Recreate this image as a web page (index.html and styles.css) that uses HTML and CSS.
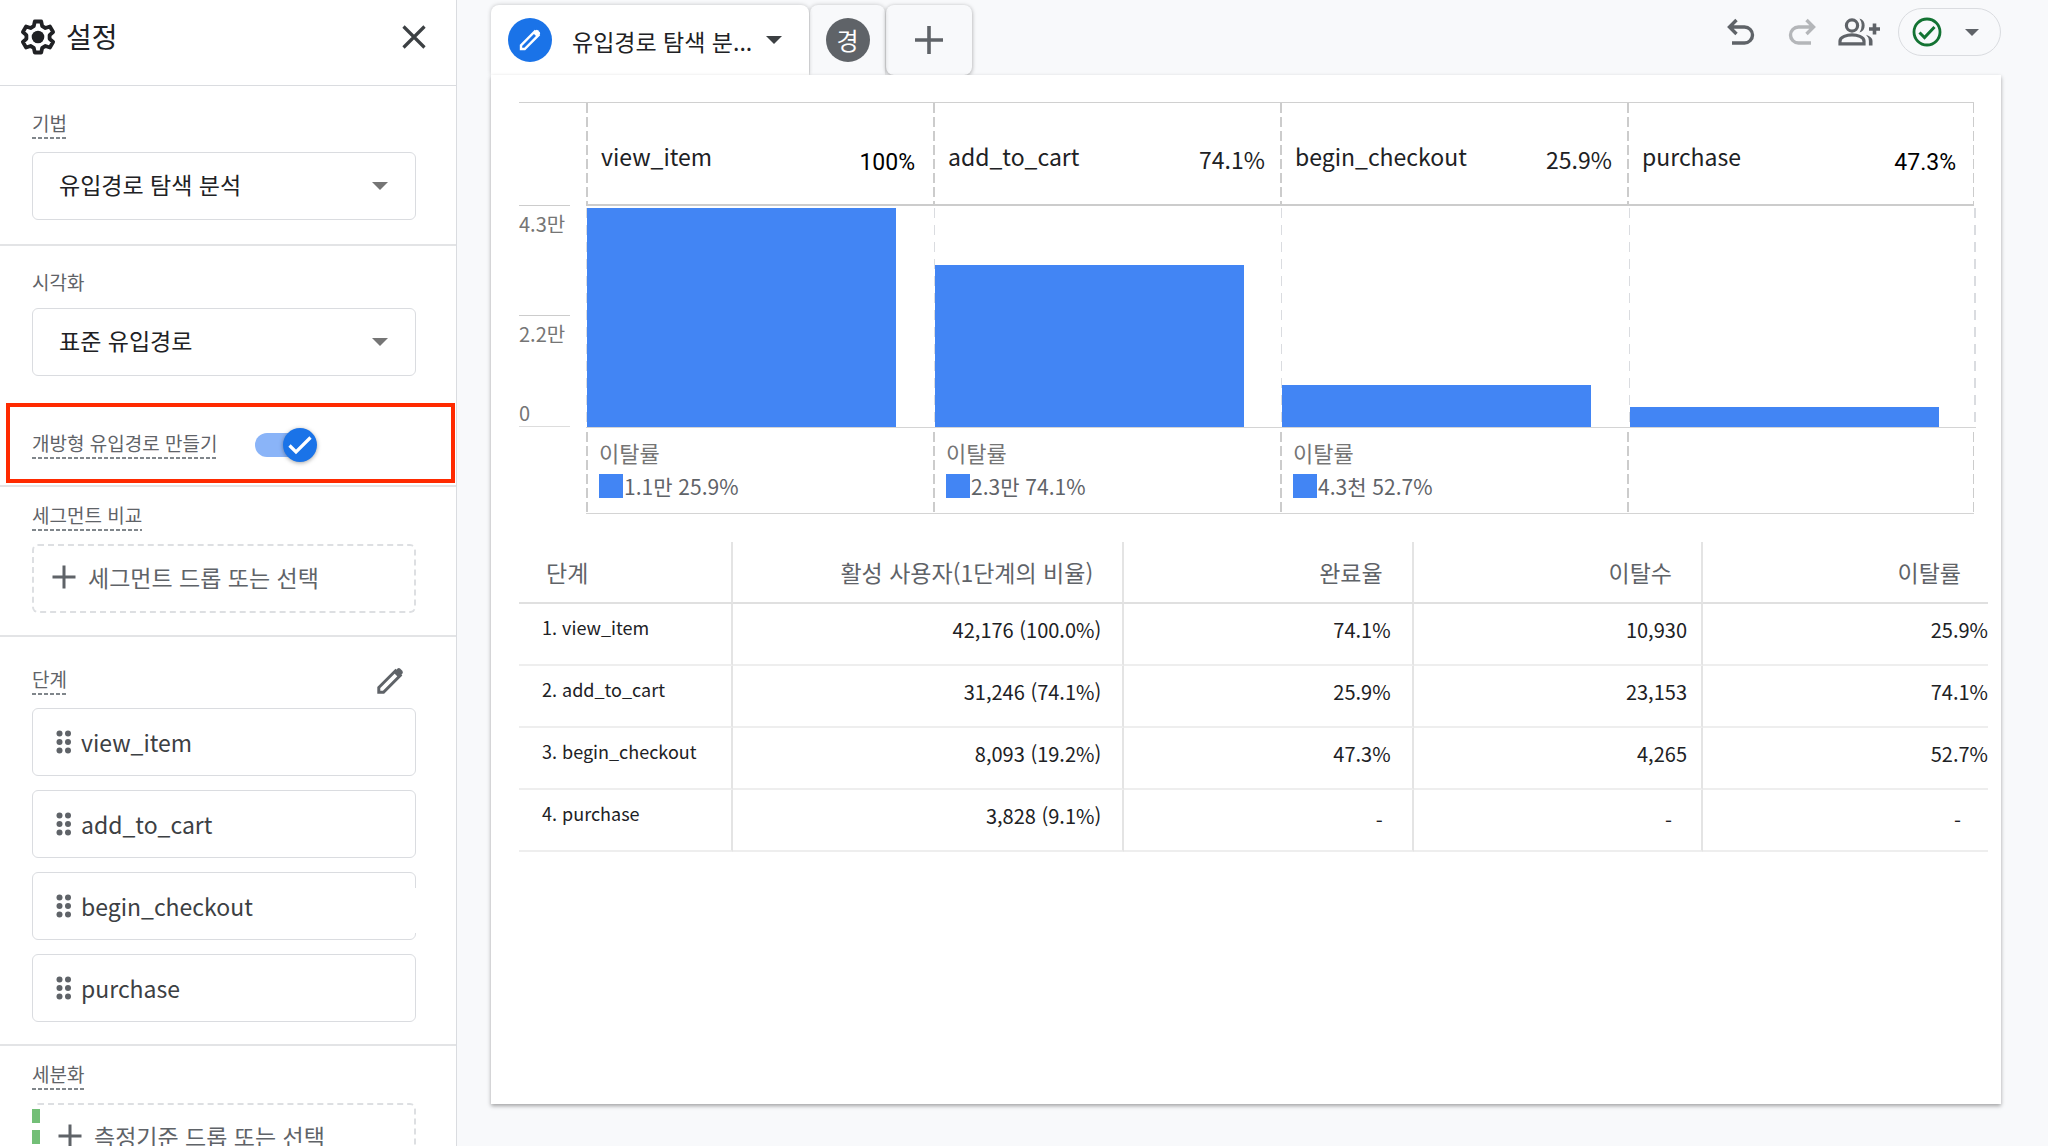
FILE: index.html
```html
<!DOCTYPE html>
<html lang="ko">
<head>
<meta charset="utf-8">
<meta name="viewport" content="width=device-width, initial-scale=1">
<title>유입경로 탐색 분석</title>
<link rel="stylesheet" href="styles.css">
</head>
<body>
<div class="app">
  <aside class="sidebar">
    <header class="sidebar-head">
      <svg class="gear" viewBox="0 0 36 36" aria-hidden="true"><path d="M14.8 2.5h6.4l1 4.6 3.2 1.9 4.5-1.5 3.2 5.5-3.5 3.2v3.6l3.5 3.2-3.2 5.5-4.5-1.5-3.2 1.9-1 4.6h-6.4l-1-4.6-3.2-1.9-4.5 1.5-3.2-5.5 3.5-3.2v-3.6l-3.5-3.2 3.2-5.5 4.5 1.5 3.2-1.9z" fill="none" stroke="#202124" stroke-width="3.8" stroke-linejoin="round"/><circle cx="18" cy="18" r="6.3" fill="#202124"/></svg>
      <h1 class="sidebar-title">설정</h1>
      <button class="icon-btn close" type="button" aria-label="닫기"><svg width="24" height="24" viewBox="0 0 24 24"><path d="M1.500 1.500l21 21M22.500 1.500l-21 21" stroke="#3c4043" stroke-width="3.200"/></svg></button>
    </header>

    <section class="group">
      <label class="label hinted" for="technique">기법</label>
      <div class="select-wrap"><select class="select" id="technique"><option>유입경로 탐색 분석</option></select></div>
    </section>

    <section class="group visual">
      <label class="label plain" for="visual">시각화</label>
      <div class="select-wrap"><select class="select" id="visual"><option>표준 유입경로</option></select></div>
      <div class="highlight">
        <label class="label hinted" for="open-funnel">개방형 유입경로 만들기</label>
        <span class="switch">
          <input type="checkbox" id="open-funnel" checked>
          <svg class="switch-check" viewBox="0 0 24 24" aria-hidden="true"><path d="M1.500 12.500l6.500 6.500L22.500 4.500" fill="none" stroke="#fff" stroke-width="3.200"/></svg>
        </span>
      </div>
    </section>

    <section class="group compact">
      <h2 class="label hinted">세그먼트 비교</h2>
      <button class="drop" type="button"><svg class="plus" viewBox="0 0 24 24"><path d="M12 .5v23M.5 12h23" stroke="#5f6368" stroke-width="3"/></svg>세그먼트 드롭 또는 선택</button>
    </section>

    <section class="group steps">
      <div class="group-head">
        <h2 class="label hinted">단계</h2>
        <button class="icon-btn" type="button" aria-label="단계 수정"><svg width="28" height="28" viewBox="0 0 28 28"><path d="M2.800 20.500L19.500 3.800l4.700 4.700L7.500 25.200H2.800z" fill="none" stroke="#5f6368" stroke-width="3"/><path d="M17.500 5.500L21.300 1.700q1.500-1.200 3 0l2 2q1.200 1.500 0 3l-3.800 3.800z" fill="#5f6368"/></svg></button>
      </div>
      <ul class="step-list">
        <li><button class="step" type="button"><svg class="grip" viewBox="0 0 18 24"><g fill="#5f6368"><circle cx="4.500" cy="3.500" r="3"/><circle cx="13" cy="3.500" r="3"/><circle cx="4.500" cy="12" r="3"/><circle cx="13" cy="12" r="3"/><circle cx="4.500" cy="20.500" r="3"/><circle cx="13" cy="20.500" r="3"/></g></svg>view_item</button></li>
        <li><button class="step" type="button"><svg class="grip" viewBox="0 0 18 24"><g fill="#5f6368"><circle cx="4.500" cy="3.500" r="3"/><circle cx="13" cy="3.500" r="3"/><circle cx="4.500" cy="12" r="3"/><circle cx="13" cy="12" r="3"/><circle cx="4.500" cy="20.500" r="3"/><circle cx="13" cy="20.500" r="3"/></g></svg>add_to_cart</button></li>
        <li><button class="step open-edge" type="button"><svg class="grip" viewBox="0 0 18 24"><g fill="#5f6368"><circle cx="4.500" cy="3.500" r="3"/><circle cx="13" cy="3.500" r="3"/><circle cx="4.500" cy="12" r="3"/><circle cx="13" cy="12" r="3"/><circle cx="4.500" cy="20.500" r="3"/><circle cx="13" cy="20.500" r="3"/></g></svg>begin_checkout</button></li>
        <li><button class="step" type="button"><svg class="grip" viewBox="0 0 18 24"><g fill="#5f6368"><circle cx="4.500" cy="3.500" r="3"/><circle cx="13" cy="3.500" r="3"/><circle cx="4.500" cy="12" r="3"/><circle cx="13" cy="12" r="3"/><circle cx="4.500" cy="20.500" r="3"/><circle cx="13" cy="20.500" r="3"/></g></svg>purchase</button></li>
      </ul>
    </section>

    <section class="group compact">
      <h2 class="label hinted">세분화</h2>
      <button class="drop dimension" type="button"><svg class="plus" viewBox="0 0 24 24"><path d="M12 .5v23M.5 12h23" stroke="#5f6368" stroke-width="3"/></svg>측정기준 드롭 또는 선택</button>
    </section>
  </aside>

  <main class="main">
    <div class="topbar">
      <nav class="tabs">
        <button class="tab active" type="button">
          <span class="badge blue"><svg width="24" height="24" viewBox="0 0 24 24"><path d="M3 17.300L16.800 3.500l3.700 3.700L6.700 21H3z" fill="none" stroke="#fff" stroke-width="2.400"/><path d="M15 5l2.800-2.800q1-.8 2 0l2 2q.8 1 0 2L19 9z" fill="#fff"/></svg></span>
          <span class="tab-name">유입경로 탐색 분...</span>
          <span class="caret dark"></span>
        </button>
        <button class="tab second" type="button"><span class="badge gray">경</span></button>
        <button class="tab add" type="button" aria-label="탭 추가"><svg width="28" height="28" viewBox="0 0 28 28"><path d="M14 0v28M0 14h28" stroke="#5f6368" stroke-width="3.600"/></svg></button>
      </nav>
      <div class="tools">
        <button class="icon-btn" type="button" aria-label="실행취소"><svg width="28" height="28" viewBox="0 0 28 28"><path d="M9.500 2L2.500 9l7 7M3 9h14.500a7.500 7.500 0 0 1 0 16H5" fill="none" stroke="#5f6368" stroke-width="3.400"/></svg></button>
        <button class="icon-btn redo" type="button" aria-label="다시 실행"><svg width="28" height="28" viewBox="0 0 28 28"><path d="M18.500 2l7 7-7 7M25 9H10.500a7.500 7.500 0 0 0 0 16H23" fill="none" stroke="#b4b6b9" stroke-width="3.400"/></svg></button>
        <button class="icon-btn share" type="button" aria-label="공유"><svg width="42" height="30" viewBox="0 0 42 30"><g fill="none" stroke="#5f6368" stroke-width="3.200"><circle cx="14" cy="8.500" r="5.600"/><path d="M2 26.900v-3c0-4 7-6 12-6s12 2 12 6v3z"/></g><path d="M21.500 1.600a7.200 7.200 0 0 1 0 13.800q4.500-6.900 0-13.800zM28 17.800c4.500 1.500 6.500 3.500 6.500 6v4.700h-3.600v-4.500q0-3.500-2.900-6.200z" fill="#5f6368"/><path d="M36.500 6.500v11M31 12h11" stroke="#5f6368" stroke-width="3.600"/></svg></button>
        <button class="status" type="button" aria-label="상태"><svg width="30" height="30" viewBox="0 0 30 30"><circle cx="15" cy="15" r="13" fill="none" stroke="#137333" stroke-width="2.800"/><path d="M7.500 15.500l5 5L22.500 10" fill="none" stroke="#137333" stroke-width="3"/></svg><span class="caret small"></span></button>
      </div>
    </div>

    <div class="panel">
      <div class="chart">
        <div class="chart-head">
          <div class="cell"><span>view_item</span><span class="pct strong">100%</span></div>
          <div class="cell"><span>add_to_cart</span><span class="pct">74.1%</span></div>
          <div class="cell"><span>begin_checkout</span><span class="pct">25.9%</span></div>
          <div class="cell"><span>purchase</span><span class="pct strong">47.3%</span></div>
        </div>
        <div class="plot">
          <div class="axis"><span>4.3만</span><span>2.2만</span><span class="zero">0</span></div>
          <div class="bars">
            <div class="col"><div class="bar" style="height:219px"></div></div>
            <div class="col"><div class="bar" style="height:162px"></div></div>
            <div class="col"><div class="bar" style="height:42px"></div></div>
            <div class="col"><div class="bar" style="height:20px"></div></div>
          </div>
        </div>
        <div class="chart-foot">
          <div class="drop-rate"><span>이탈률</span><span class="rate"><i class="swatch"></i>1.1만 25.9%</span></div>
          <div class="drop-rate"><span>이탈률</span><span class="rate"><i class="swatch"></i>2.3만 74.1%</span></div>
          <div class="drop-rate"><span>이탈률</span><span class="rate"><i class="swatch"></i>4.3천 52.7%</span></div>
          <div class="drop-rate"></div>
        </div>
      </div>

      <table class="data">
        <colgroup><col class="c-step"><col class="c-users"><col class="c-done"><col class="c-left"><col class="c-rate"></colgroup>
        <thead><tr><th scope="col">단계</th><th scope="col">활성 사용자(1단계의 비율)</th><th scope="col">완료율</th><th scope="col">이탈수</th><th scope="col">이탈률</th></tr></thead>
        <tbody>
          <tr><th scope="row">1. view_item</th><td>42,176 (100.0%)</td><td>74.1%</td><td>10,930</td><td>25.9%</td></tr>
          <tr><th scope="row">2. add_to_cart</th><td>31,246 (74.1%)</td><td>25.9%</td><td>23,153</td><td>74.1%</td></tr>
          <tr><th scope="row">3. begin_checkout</th><td>8,093 (19.2%)</td><td>47.3%</td><td>4,265</td><td>52.7%</td></tr>
          <tr><th scope="row">4. purchase</th><td>3,828 (9.1%)</td><td class="none">-</td><td class="none">-</td><td class="none">-</td></tr>
        </tbody>
      </table>
    </div>
  </main>
</div>
</body>
</html>
```
FILE: styles.css
```css
* { box-sizing: border-box; }

body {
  margin: 0;
  background: #f8f9fb;
  color: #202124;
  font-family: "Noto Sans CJK KR", "Noto Sans", sans-serif;
  font-size: 22px;
  line-height: 32px;
}

button, select {
  margin: 0;
  padding: 0;
  border: 0;
  background: none;
  color: inherit;
  font: inherit;
}

svg { display: block; flex: none; }

.app { display: flex; height: 100vh; min-height: 600px; }

/* Settings panel */
.sidebar {
  flex: 0 0 457px;
  overflow: hidden;
  background: #fff;
  border-right: 1px solid #dadce0;
}

.sidebar-head {
  display: flex;
  align-items: center;
  height: 86px;
  padding: 0 30px 11px 20px;
  border-bottom: 1px solid #dadce0;
}

.gear { width: 36px; height: 36px; }
.sidebar-title { margin: 0 auto 0 10px; padding-bottom: 3px; font-size: 28px; font-weight: 400; line-height: 40px; }
.icon-btn { display: flex; }

.group { padding: 25px 40px 24px 32px; border-bottom: 2px solid #e3e4e6; }
.group.visual { padding-top: 24px; padding-bottom: 2px; }
.group.compact { padding-top: 16px; padding-bottom: 22px; }
.group.steps { padding-top: 30px; padding-bottom: 22px; }
.group-head { display: flex; justify-content: space-between; padding-right: 12px; }

.label {
  display: block;
  width: max-content;
  height: 28px;
  margin: 0 0 13px;
  color: #5f6368;
  font-size: 19px;
  font-weight: 400;
  line-height: 24px;
}
.label.hinted { background: repeating-linear-gradient(90deg, #80868b 0 4px, transparent 4px 6px) bottom / 100% 2px no-repeat; }
.label.plain { margin-bottom: 10px; }

.select-wrap { position: relative; }
.select-wrap::after {
  content: "";
  position: absolute;
  top: 30px;
  right: 28px;
  border: 8px solid transparent;
  border-top-color: #757575;
  border-bottom: 0;
  pointer-events: none;
}
.select {
  display: block;
  width: 100%;
  height: 68px;
  padding: 0 60px 4px 26px;
  border: 1px solid #dadce0;
  border-radius: 6px;
  appearance: none;
  font-size: 23px;
}

.highlight {
  display: flex;
  align-items: center;
  height: 80px;
  margin: 27px -39px 0 -26px;
  padding: 4px 0 0 22px;
  border: 4px solid #ff2a00;
}
.highlight .label { margin: 0; }

.switch { position: relative; display: flex; width: 62px; height: 34px; margin-left: 38px; }
.switch input {
  width: 56px;
  height: 24px;
  margin: 5px 0;
  border-radius: 12px;
  background: #8ab4f8;
  appearance: none;
}
.switch::after {
  content: "";
  position: absolute;
  top: 0;
  right: 0;
  width: 34px;
  height: 34px;
  border-radius: 50%;
  background: #1a73e8;
  box-shadow: 0 1px 4px rgba(0, 0, 0, .35);
  pointer-events: none;
}
.switch-check { position: absolute; top: 5px; right: 5px; z-index: 1; width: 24px; height: 24px; pointer-events: none; }

.drop {
  display: flex;
  align-items: center;
  gap: 12px;
  width: 100%;
  height: 69px;
  padding: 0 18px 4px;
  border: 2px dashed #dddfe2;
  border-radius: 6px;
  color: #5f6368;
  font-size: 23px;
}
.plus { width: 24px; height: 24px; }
.drop.dimension {
  padding-left: 24px;
  border-left-color: transparent;
  background: repeating-linear-gradient(180deg, #73bf77 0 14px, transparent 14px 21px) 0 6px / 8px 100% no-repeat border-box;
}

.step-list { display: grid; gap: 14px; margin: 0; padding: 0; list-style: none; }
.step {
  position: relative;
  display: flex;
  align-items: center;
  gap: 8px;
  width: 100%;
  height: 68px;
  padding: 0 22px;
  border: 1px solid #dadce0;
  border-radius: 6px;
  color: #3c4043;
  font-size: 23px;
}
.step.open-edge::after {
  content: "";
  position: absolute;
  top: 15px;
  right: -1px;
  bottom: 6px;
  width: 2px;
  background: #fff;
}
.grip { width: 18px; height: 24px; }

/* Workspace */
.main { display: flex; flex: 1; flex-direction: column; min-width: 0; padding: 0 47px 42px 34px; }

.topbar { display: flex; justify-content: space-between; align-items: flex-start; height: 75px; }

.tabs { display: flex; gap: 1px; padding-top: 5px; }
.tab {
  display: flex;
  align-items: center;
  justify-content: center;
  height: 70px;
  border-radius: 8px 8px 0 0;
  box-shadow: 0 0 4px rgba(0, 0, 0, .22);
}
.tab.active { position: relative; justify-content: flex-start; width: 318px; padding-left: 17px; background: #fff; font-size: 23px; }
.tab.second { width: 75px; }
.tab.add { width: 86px; border-radius: 8px; box-shadow: 0 1px 4px rgba(0, 0, 0, .35); }
.tab-name { margin: 0 14px 0 20px; padding-top: 2px; white-space: nowrap; }

.badge { display: flex; align-items: center; justify-content: center; width: 44px; height: 44px; border-radius: 50%; color: #fff; }
.badge.blue { background: #1a73e8; }
.badge.gray { background: #5f6368; font-size: 24px; }

.caret { border: 8px solid transparent; border-bottom: 0; border-top-color: #3c4043; }
.caret.small { border-width: 7px; border-bottom: 0; border-top-color: #5f6368; }

.tools { display: flex; align-items: center; padding-top: 8px; }
.redo { margin-left: 33px; }
.share { margin: 0 18px 0 22px; }
.status {
  display: flex;
  align-items: center;
  justify-content: space-between;
  width: 103px;
  height: 48px;
  padding: 0 21px 0 13px;
  border: 1px solid #dadce0;
  border-radius: 24px;
}

.panel {
  position: relative;
  flex: 1;
  padding: 27px 13px 27px 28px;
  background: #fff;
  box-shadow: 0 2px 4px rgba(0, 0, 0, .35);
}

/* Funnel chart */
.chart { margin: 0 14px 28px 0; }

.chart-head, .chart-foot { display: grid; grid-template-columns: repeat(4, 1fr); padding-left: 67px; }
.chart-head { height: 104px; border-top: 1px solid #d0d0d0; background: linear-gradient(#ccc, #ccc) 67px 100% / 100% 2px no-repeat; }
.cell {
  display: flex;
  justify-content: space-between;
  align-items: center;
  padding: 2px 15px 0;
  background: repeating-linear-gradient(180deg, #ccc 0 10px, transparent 10px 14px) 0 0 / 2px 100% no-repeat;
  font-size: 23px;
}
.cell:last-child { background: repeating-linear-gradient(180deg, #ccc 0 10px, transparent 10px 14px) 0 0 / 2px 100% no-repeat, repeating-linear-gradient(180deg, #ccc 0 10px, transparent 10px 14px) 100% 0 / 1px 100% no-repeat; }
.pct { padding-top: 6px; }
.pct.strong { padding: 14px 3px 0 0; color: #000; font-family: Roboto, sans-serif; }

.plot { display: flex; height: 222px; margin-right: -2px; }
.axis { display: flex; flex-direction: column; width: 51px; margin: -1px 16px 0 0; color: #757575; font-size: 20px; }
.axis span { height: 110px; padding-top: 2px; border-top: 1px solid #ccc; }
.axis .zero { height: 29px; margin-top: -27px; padding: 0; border-top: 0; border-bottom: 1px solid #ddd; line-height: 30px; }
.bars { display: grid; flex: 1; grid-template-columns: repeat(4, 1fr); border-bottom: 1px solid #d4d4d4; background: repeating-linear-gradient(180deg, #dadce0 0 10px, transparent 10px 17px) 100% 2px / 2px 100% no-repeat; }
.col { display: flex; align-items: flex-end; background: repeating-linear-gradient(180deg, #dadce0 0 10px, transparent 10px 17px) 0 2px / 1px 100% no-repeat; }
.bar { width: 89%; margin-left: 1px; background: #4285f4; }

.chart-foot { height: 86px; background: linear-gradient(#d4d4d4, #d4d4d4) 67px 100% / 100% 1px no-repeat; }
.drop-rate {
  padding: 8px 13px 0;
  background: repeating-linear-gradient(180deg, #ccc 0 10px, transparent 10px 14px) 0 4px / 2px 80px no-repeat;
  color: #757575;
}
.drop-rate:last-child { background: repeating-linear-gradient(180deg, #ccc 0 10px, transparent 10px 14px) 0 4px / 2px 80px no-repeat, repeating-linear-gradient(180deg, #ccc 0 10px, transparent 10px 14px) 100% 4px / 1px 80px no-repeat; }
.drop-rate > span { display: flex; align-items: center; }
.rate { gap: 1px; height: 36px; color: #5f6368; font-size: 21px; }
.swatch { width: 24px; height: 24px; background: #4285f4; }

/* Step table */
.data { width: 100%; border-spacing: 0; table-layout: fixed; font-size: 20px; }
.c-step { width: 14.6%; }
.c-users { width: 26.6%; }
.c-done { width: 19.7%; }
.c-left { width: 19.7%; }
.c-rate { width: 19.4%; }
.data th, .data td { height: 62px; padding: 0 21px 8px 0; border-right: 2px solid #e4e4e4; border-bottom: 2px solid #eee; font-weight: 400; text-align: right; white-space: nowrap; }
.data thead th { padding: 0 29px 0 0; border-bottom-color: #e0e0e0; color: #5f6368; font-size: 23px; }
.data tr > :last-child { border-right: 0; padding-right: 0; }
.data thead tr > :last-child, .data tr > .none:last-child { padding-right: 27px; }
.data thead tr > :first-child { padding-left: 27px; text-align: left; }
.data tbody th { padding: 0 0 15px 23px; font-size: 18px; text-align: left; }
.data tbody td:nth-child(4) { padding-right: 14px; }
.data tbody td.none { padding: 2px 29px 0 0; }
```
